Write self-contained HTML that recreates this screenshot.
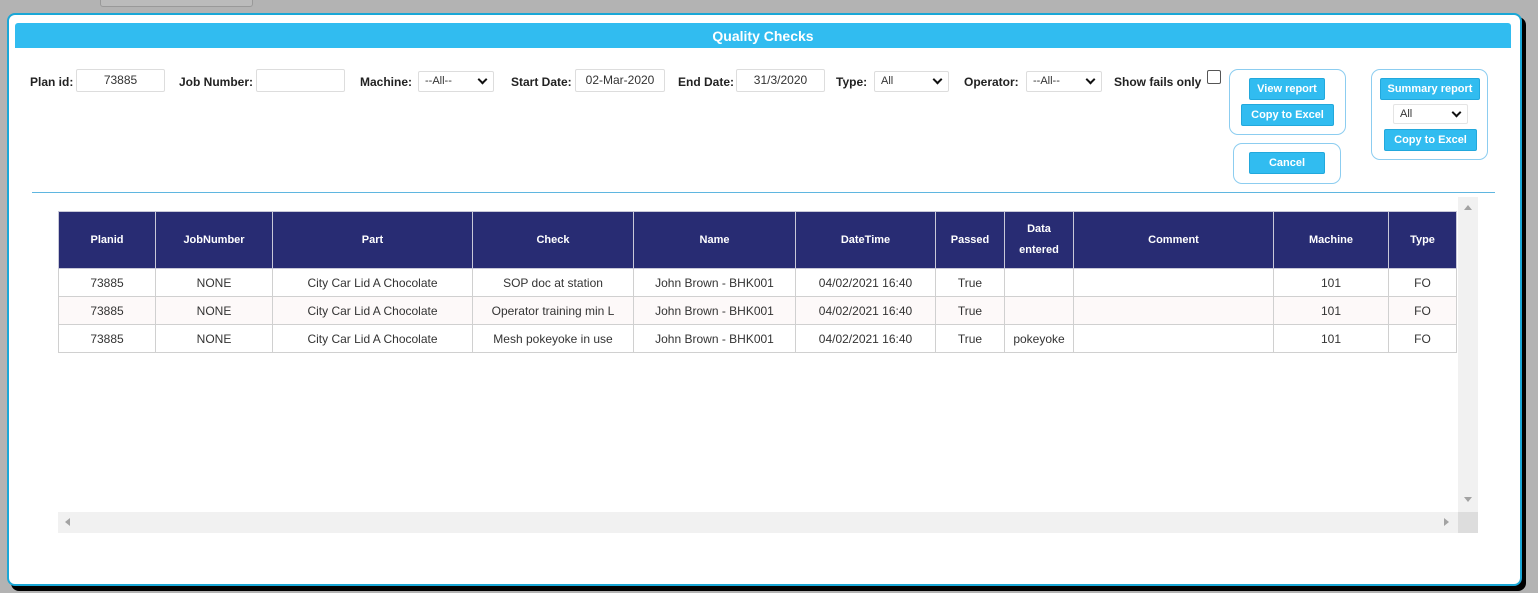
<!DOCTYPE html>
<html><head><meta charset="utf-8"><style>
*{box-sizing:border-box;margin:0;padding:0}
body{width:1538px;height:593px;background:#b3b3b3;font-family:"Liberation Sans",sans-serif;position:relative;overflow:hidden}
.tab{position:absolute;left:100px;top:-4px;width:153px;height:11px;border:1px solid #999;border-radius:3px;background:#bbb}
.shadow{position:absolute;left:11px;top:17px;width:1515px;height:574px;background:#000;border-radius:8px}
.dlg{position:absolute;left:7px;top:13px;width:1515px;height:573px;background:#fff;border:2px solid #1aa7d6;border-radius:8px}
.title{position:absolute;left:15px;top:23px;width:1496px;height:25px;background:#31bcf0;color:#fff;font-weight:bold;font-size:14px;text-align:center;line-height:26px;border-radius:3px 3px 0 0}
.lbl{position:absolute;top:75px;font-size:12px;font-weight:bold;color:#222}
.inp{position:absolute;top:69px;height:23px;border:1px solid #ddd;border-radius:2px;font-size:12px;color:#333;text-align:center;line-height:21px}
.sel{position:absolute;top:71px;height:21px;border:1px solid #ddd;border-radius:2px;font-size:11px;color:#333;line-height:19px;padding-left:6px}
.sel:after{content:"";position:absolute;right:7px;top:4px;width:5px;height:5px;border-right:2px solid #111;border-bottom:2px solid #111;transform:rotate(45deg)}
.box{position:absolute;border:1.5px solid #8ccdf0;border-radius:9px}
.btn{position:absolute;background:#31bcf0;color:#fff;font-weight:bold;font-size:11px;text-align:center;border-radius:2px;border:1px solid #22a8dc}
.hr{position:absolute;left:32px;top:192px;width:1463px;height:1px;background:#5fb6e0}
table{position:absolute;left:58px;top:211px;border-collapse:collapse;font-size:12px;color:#333}
th{background:#282c73;color:#fff;font-size:11px;font-weight:bold;height:57px;border:1px solid #c8c8d8;line-height:21px}
td{height:28px;text-align:center;border:1px solid #d0d0d0;white-space:nowrap}
tr.alt td{background:#fdf9f9}
.vs{position:absolute;left:1458px;top:197px;width:20px;height:315px;background:#f1f1f1}
.hs{position:absolute;left:58px;top:512px;width:1400px;height:21px;background:#f1f1f1}
.corner{position:absolute;left:1458px;top:512px;width:20px;height:21px;background:#ddd}
</style></head><body>
<div class="tab"></div>
<div class="shadow"></div>
<div class="dlg"></div>
<div class="title">Quality Checks</div>

<div class="lbl" style="left:30px">Plan id:</div>
<div class="inp" style="left:76px;width:89px">73885</div>
<div class="lbl" style="left:179px">Job Number:</div>
<div class="inp" style="left:256px;width:89px"></div>
<div class="lbl" style="left:360px">Machine:</div>
<div class="sel" style="left:418px;width:76px">--All--</div>
<div class="lbl" style="left:511px">Start Date:</div>
<div class="inp" style="left:575px;width:90px">02-Mar-2020</div>
<div class="lbl" style="left:678px">End Date:</div>
<div class="inp" style="left:736px;width:89px">31/3/2020</div>
<div class="lbl" style="left:836px">Type:</div>
<div class="sel" style="left:874px;width:75px">All</div>
<div class="lbl" style="left:964px">Operator:</div>
<div class="sel" style="left:1026px;width:76px">--All--</div>
<div class="lbl" style="left:1114px">Show fails only</div>
<div style="position:absolute;left:1207px;top:70px;width:14px;height:14px;border:1px solid #555;border-radius:2px"></div>

<div class="box" style="left:1229px;top:69px;width:117px;height:66px"></div>
<div class="btn" style="left:1249px;top:78px;width:76px;height:22px;line-height:20px">View report</div>
<div class="btn" style="left:1241px;top:104px;width:93px;height:22px;line-height:20px">Copy to Excel</div>
<div class="box" style="left:1233px;top:143px;width:108px;height:41px"></div>
<div class="btn" style="left:1249px;top:152px;width:76px;height:22px;line-height:20px">Cancel</div>
<div class="box" style="left:1371px;top:69px;width:117px;height:91px"></div>
<div class="btn" style="left:1380px;top:78px;width:100px;height:22px;line-height:20px">Summary report</div>
<div class="sel" style="left:1393px;top:104px;width:75px;height:20px;border-color:#e4e4e4">All</div>
<div class="btn" style="left:1384px;top:129px;width:93px;height:22px;line-height:20px">Copy to Excel</div>

<div class="hr"></div>

<table>
<tr><th style="width:97px">Planid</th><th style="width:117px">JobNumber</th><th style="width:200px">Part</th><th style="width:161px">Check</th><th style="width:162px">Name</th><th style="width:140px">DateTime</th><th style="width:69px">Passed</th><th style="width:69px">Data<br>entered</th><th style="width:200px">Comment</th><th style="width:115px">Machine</th><th style="width:68px">Type</th></tr>
<tr><td>73885</td><td>NONE</td><td>City Car Lid A Chocolate</td><td>SOP doc at station</td><td>John Brown - BHK001</td><td>04/02/2021 16:40</td><td>True</td><td></td><td></td><td>101</td><td>FO</td></tr>
<tr class="alt"><td>73885</td><td>NONE</td><td>City Car Lid A Chocolate</td><td>Operator training min L</td><td>John Brown - BHK001</td><td>04/02/2021 16:40</td><td>True</td><td></td><td></td><td>101</td><td>FO</td></tr>
<tr><td>73885</td><td>NONE</td><td>City Car Lid A Chocolate</td><td>Mesh pokeyoke in use</td><td>John Brown - BHK001</td><td>04/02/2021 16:40</td><td>True</td><td>pokeyoke</td><td></td><td>101</td><td>FO</td></tr>
</table>

<div class="vs">
 <div style="position:absolute;left:6px;top:8px;border:4px solid transparent;border-bottom:5px solid #a3a3a3;border-top:0"></div>
 <div style="position:absolute;left:6px;top:300px;border:4px solid transparent;border-top:5px solid #a3a3a3;border-bottom:0"></div>
</div>
<div class="hs">
 <div style="position:absolute;left:7px;top:6px;border:4px solid transparent;border-right:5px solid #a3a3a3;border-left:0"></div>
 <div style="position:absolute;left:1386px;top:6px;border:4px solid transparent;border-left:5px solid #a3a3a3;border-right:0"></div>
</div>
<div class="corner"></div>
</body></html>
